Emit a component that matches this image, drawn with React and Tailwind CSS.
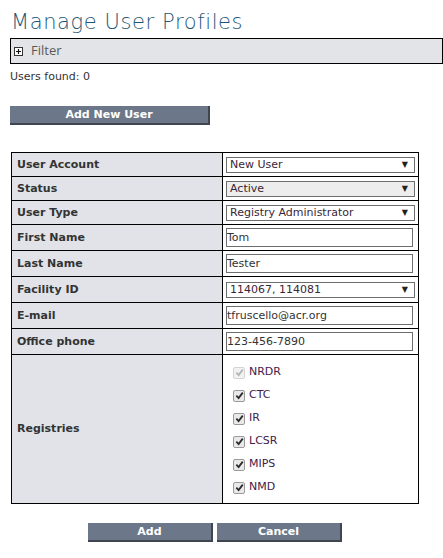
import React from 'react';

const font = { fontFamily: 'Verdana, "DejaVu Sans", sans-serif' };

const Select = ({ value, disabled }) => (
  <div
    className={`flex items-center justify-between h-[16px] w-[189px] border border-[#6d6d6d] pl-[3px] pr-[6px] text-[11px] leading-none text-[#3a2636] ${
      disabled ? 'bg-[#ededed]' : 'bg-white'
    }`}
  >
    <span>{value}</span>
    <span className="text-[8px] text-[#222]">▼</span>
  </div>
);

const TextInput = ({ value }) => (
  <input
    readOnly
    value={value}
    className="block h-[19px] w-[187px] border border-[#6d6d6d] bg-white px-0 text-[11px] text-[#333] outline-none"
    style={font}
  />
);

const Check = ({ label, disabled }) => (
  <div className="flex items-center h-[23px]">
    <span
      className={`flex items-center justify-center w-[12px] h-[12px] rounded-[2px] border ${
        disabled ? 'border-[#d4d4d4] bg-[#f2f2f2]' : 'border-[#9a9a9a] bg-[#e9e9e9]'
      }`}
    >
      <svg viewBox="0 0 10 10" className="w-[9px] h-[9px]">
        <path
          d="M1.5 5.2 L4 7.8 L8.6 1.8"
          fill="none"
          stroke={disabled ? '#b4b4b4' : '#2b2b2b'}
          strokeWidth="2"
        />
      </svg>
    </span>
    <span className="ml-[4px] text-[11px] text-[#44204a]">{label}</span>
  </div>
);

const Label = ({ children }) => (
  <td className="w-[211px] border border-black bg-[#e1e3e9] pl-[5px] pt-[1px] text-[11px] font-bold text-[#333]">
    {children}
  </td>
);

const Value = ({ children, className = '' }) => (
  <td className={`border border-black pl-[3px] ${className}`}>{children}</td>
);

const Button = ({ children, className }) => (
  <button
    className={`block h-[19px] bg-[#6c7889] border-b-2 border-r-2 border-[#3f4650] text-[11px] font-bold text-white leading-none ${className}`}
    style={font}
  >
    {children}
  </button>
);

export default function App() {
  return (
    <div className="min-h-[558px] bg-white text-[#333]" style={font}>
      <h1
        className="pl-[11px] pt-[7px] h-[38px] text-[21px] font-extralight tracking-[0.6px] text-[#1d5778]"
        style={{ fontFamily: '"DejaVu Sans", sans-serif' }}
      >
        Manage User Profiles
      </h1>

      <div className="ml-[10px] flex items-center h-[26px] border border-black bg-[#e2e4e8]">
        <span className="ml-[3px] flex items-center justify-center w-[9px] h-[9px] border border-[#333] bg-white">
          <svg viewBox="0 0 7 7" className="w-[7px] h-[7px]">
            <path d="M1 3.5 H6 M3.5 1 V6" stroke="#111" strokeWidth="1.2" />
          </svg>
        </span>
        <span className="ml-[8px] text-[13px] text-[#5a5a5a]" style={{ fontFamily: '"Open Sans", sans-serif' }}>
          Filter
        </span>
      </div>

      <p className="pl-[10px] pt-[5px] h-[42px] text-[11px] text-[#333]">Users found: 0</p>

      <Button className="ml-[10px] w-[200px]">Add New User</Button>

      <table className="mt-[27px] ml-[11px] w-[408px] border-collapse border border-black">
        <tbody>
          <tr className="h-[24px]">
            <Label>User Account</Label>
            <Value><Select value="New User" /></Value>
          </tr>
          <tr className="h-[24px]">
            <Label>Status</Label>
            <Value><Select value="Active" disabled /></Value>
          </tr>
          <tr className="h-[24px]">
            <Label>User Type</Label>
            <Value><Select value="Registry Administrator" /></Value>
          </tr>
          <tr className="h-[26px]">
            <Label>First Name</Label>
            <Value><TextInput value="Tom" /></Value>
          </tr>
          <tr className="h-[26px]">
            <Label>Last Name</Label>
            <Value><TextInput value="Tester" /></Value>
          </tr>
          <tr className="h-[26px]">
            <Label>Facility ID</Label>
            <Value><Select value="114067, 114081" /></Value>
          </tr>
          <tr className="h-[26px]">
            <Label>E-mail</Label>
            <Value><TextInput value="tfruscello@acr.org" /></Value>
          </tr>
          <tr className="h-[26px]">
            <Label>Office phone</Label>
            <Value><TextInput value="123-456-7890" /></Value>
          </tr>
          <tr className="h-[148px]">
            <Label>Registries</Label>
            <Value className="!pl-[10px] pt-[6px] pb-[4px] align-top">
              <Check label="NRDR" disabled />
              <Check label="CTC" />
              <Check label="IR" />
              <Check label="LCSR" />
              <Check label="MIPS" />
              <Check label="NMD" />
            </Value>
          </tr>
        </tbody>
      </table>

      <div className="mt-[19px] ml-[11px] w-[408px] flex justify-center gap-[4px]">
        <Button className="w-[125px]">Add</Button>
        <Button className="w-[125px]">Cancel</Button>
      </div>
    </div>
  );
}
